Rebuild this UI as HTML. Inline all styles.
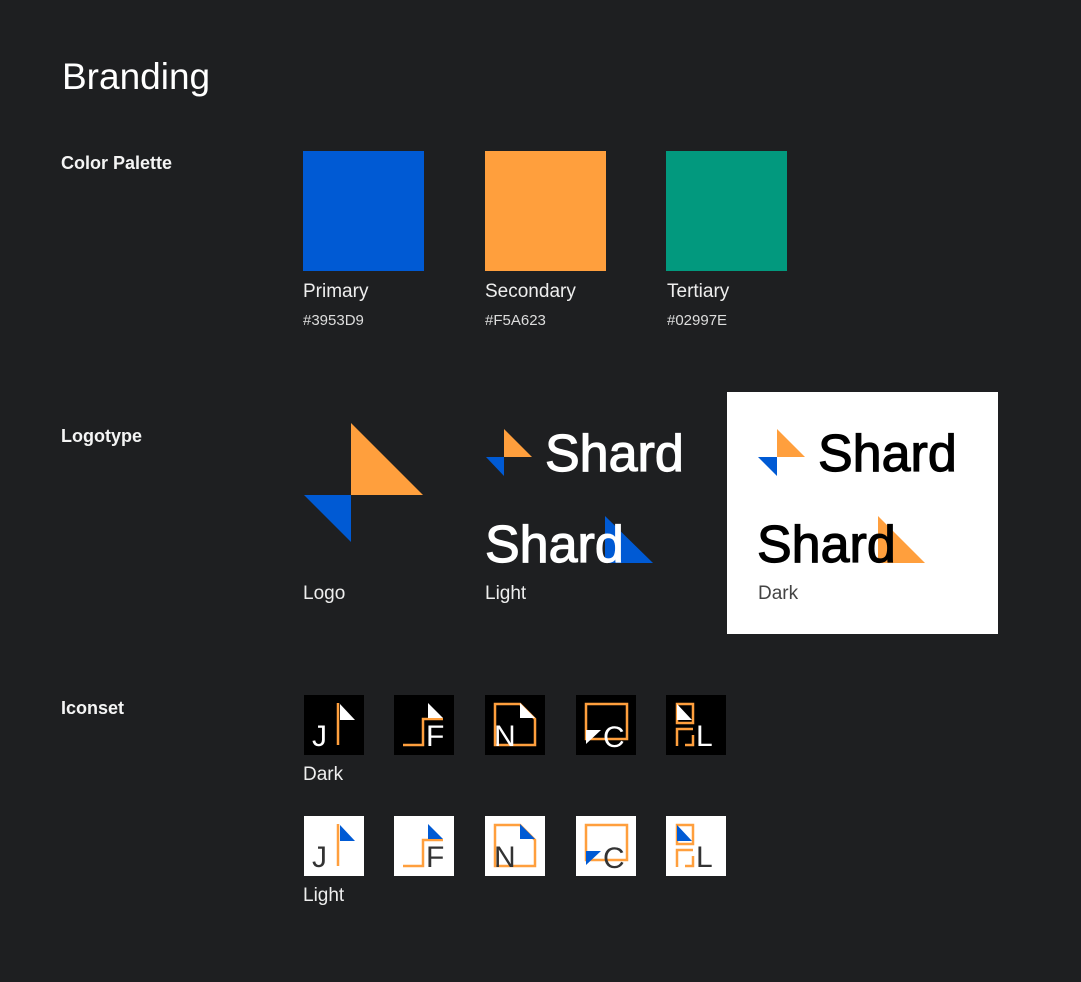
<!DOCTYPE html>
<html><head><meta charset="utf-8"><style>
body{margin:0;width:1081px;height:982px;background:#1e1f21;font-family:"Liberation Sans",sans-serif;color:#fff;position:relative;overflow:hidden}
.a{position:absolute;white-space:nowrap}
.h{font-size:37px;left:62px;top:56px}
.sec{font-size:18px;font-weight:bold;left:61px;color:#f4f4f4}
.lbl{font-size:19px;color:#eee}
.hex{font-size:15px;color:#ddd}
.sw{position:absolute;width:121px;height:120px;top:151px}
.shard{font-size:52px;font-weight:normal;-webkit-text-stroke:1.2px currentColor}
svg{position:absolute}
</style></head><body>
<div class="a h">Branding</div>
<div class="a sec" style="top:153px">Color Palette</div>
<div class="sw" style="left:303px;background:#005ad4"></div>
<div class="sw" style="left:485px;background:#ff9f3d"></div>
<div class="sw" style="left:666px;background:#02997e"></div>
<div class="a lbl" style="left:303px;top:281px">Primary</div>
<div class="a lbl" style="left:485px;top:281px">Secondary</div>
<div class="a lbl" style="left:667px;top:281px">Tertiary</div>
<div class="a hex" style="left:303px;top:312px">#3953D9</div>
<div class="a hex" style="left:485px;top:312px">#F5A623</div>
<div class="a hex" style="left:667px;top:312px">#02997E</div>

<div class="a sec" style="top:426px">Logotype</div>
<div style="position:absolute;left:727px;top:392px;width:271px;height:242px;background:#fff"></div>
<svg width="1081" height="982" style="left:0;top:0">
<polygon points="351,423 351,495 423,495" fill="#ff9f3d"/>
<polygon points="304,495 351,495 351,542" fill="#005ad4"/>
<polygon points="504,429 504,457 532,457" fill="#ff9f3d"/>
<polygon points="486,457 504,457 504,476" fill="#005ad4"/>
<polygon points="605,516 605,563 653,563" fill="#005ad4"/>
<polygon points="777,429 777,457 805,457" fill="#ff9f3d"/>
<polygon points="758,457 777,457 777,476" fill="#005ad4"/>
<polygon points="878,516 878,563 925,563" fill="#ff9f3d"/>
</svg>
<div class="a shard" style="left:545px;top:424px;color:#fff">Shard</div>
<div class="a shard" style="left:485px;top:515px;color:#fff">Shard</div>
<div class="a shard" style="left:818px;top:424px;color:#000">Shard</div>
<div class="a shard" style="left:757px;top:515px;color:#000">Shard</div>
<div class="a lbl" style="left:303px;top:583px">Logo</div>
<div class="a lbl" style="left:485px;top:583px">Light</div>
<div class="a lbl" style="left:758px;top:583px;color:#444">Dark</div>

<div class="a sec" style="top:698px">Iconset</div>

<svg width="1081" height="982" style="left:0;top:0" font-family="Liberation Sans, sans-serif">
<g transform="translate(304,695)">
<rect width="60" height="60" fill="#000"/>
<text x="8" y="51" font-size="30" fill="#fff">J</text>
<path d="M34,8V50" stroke="#ff9f3d" stroke-width="2.5"/>
<polygon points="36,9 36,25 51,25" fill="#fff"/>
</g>
<g transform="translate(394,695)">
<rect width="60" height="60" fill="#000"/>
<path d="M9,50H29V24H49" stroke="#ff9f3d" stroke-width="2.5" fill="none"/>
<text x="32" y="51" font-size="30" fill="#fff">F</text>
<polygon points="34,8 34,23 49,23" fill="#fff"/>
</g>
<g transform="translate(485,695)">
<rect width="60" height="60" fill="#000"/>
<path d="M10,9H35L50,24V50H10Z" stroke="#ff9f3d" stroke-width="2.5" fill="none"/>
<text x="9" y="51" font-size="30" fill="#fff">N</text>
<polygon points="35,8 35,23 50,23" fill="#fff"/>
</g>
<g transform="translate(576,695)">
<rect width="60" height="60" fill="#000"/>
<path d="M10,9H51V44H10Z" stroke="#ff9f3d" stroke-width="2.5" fill="none"/>
<polygon points="10,35 25,35 10,49" fill="#fff"/>
<text x="27" y="52" font-size="30" fill="#fff">C</text>
</g>
<g transform="translate(666,695)">
<rect width="60" height="60" fill="#000"/>
<path d="M11,9H27V28H11Z" stroke="#ff9f3d" stroke-width="2.5" fill="none"/>
<polygon points="11,9 26,25 11,25" fill="#fff"/>
<path d="M11,51V34H27M27,40V50H19" stroke="#ff9f3d" stroke-width="2.5" fill="none"/>
<text x="30" y="51" font-size="30" fill="#fff">L</text>
</g>
<g transform="translate(304,816)">
<rect width="60" height="60" fill="#fff"/>
<text x="8" y="51" font-size="30" fill="#333">J</text>
<path d="M34,8V50" stroke="#ff9f3d" stroke-width="2.5"/>
<polygon points="36,9 36,25 51,25" fill="#005ad4"/>
</g>
<g transform="translate(394,816)">
<rect width="60" height="60" fill="#fff"/>
<path d="M9,50H29V24H49" stroke="#ff9f3d" stroke-width="2.5" fill="none"/>
<text x="32" y="51" font-size="30" fill="#333">F</text>
<polygon points="34,8 34,23 49,23" fill="#005ad4"/>
</g>
<g transform="translate(485,816)">
<rect width="60" height="60" fill="#fff"/>
<path d="M10,9H35L50,24V50H10Z" stroke="#ff9f3d" stroke-width="2.5" fill="none"/>
<text x="9" y="51" font-size="30" fill="#333">N</text>
<polygon points="35,8 35,23 50,23" fill="#005ad4"/>
</g>
<g transform="translate(576,816)">
<rect width="60" height="60" fill="#fff"/>
<path d="M10,9H51V44H10Z" stroke="#ff9f3d" stroke-width="2.5" fill="none"/>
<polygon points="10,35 25,35 10,49" fill="#005ad4"/>
<text x="27" y="52" font-size="30" fill="#333">C</text>
</g>
<g transform="translate(666,816)">
<rect width="60" height="60" fill="#fff"/>
<path d="M11,9H27V28H11Z" stroke="#ff9f3d" stroke-width="2.5" fill="none"/>
<polygon points="11,9 26,25 11,25" fill="#005ad4"/>
<path d="M11,51V34H27M27,40V50H19" stroke="#ff9f3d" stroke-width="2.5" fill="none"/>
<text x="30" y="51" font-size="30" fill="#333">L</text>
</g>
</svg>
<div class="a lbl" style="left:303px;top:764px">Dark</div>
<div class="a lbl" style="left:303px;top:885px">Light</div>
</body></html>
